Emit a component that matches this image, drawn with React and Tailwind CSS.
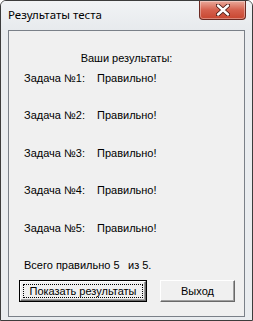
import React from 'react';

// Classic 3D push button
function WinButton({ children, isDefault = false, className = '' }) {
  return (
    <div
      className={`h-[22px] ${isDefault ? 'border border-black' : ''} ${className}`}
    >
      <div className="h-full border border-t-white border-l-white border-b-[#696969] border-r-[#696969] bg-[#f0f0f0] shadow-[inset_-1px_-1px_0_#a0a0a0]">
        <div className="h-full flex items-center justify-center p-[2px]">
          <div
            className={`h-full w-full flex items-center justify-center ${
              isDefault ? 'border border-dotted border-black' : ''
            }`}
          >
            {children}
          </div>
        </div>
      </div>
    </div>
  );
}

function ResultRow({ label, value, className = '' }) {
  return (
    <div className={`flex h-[13px] leading-[13px] ${className}`}>
      <span className="w-[73px]">{label}</span>
      <span>{value}</span>
    </div>
  );
}

export default function App() {
  const results = ['Задача №1:', 'Задача №2:', 'Задача №3:', 'Задача №4:', 'Задача №5:'];
  const gaps = ['mt-[7px]', 'mt-[24px]', 'mt-[25px]', 'mt-[24px]', 'mt-[25px]'];

  return (
    <div className="w-[253px] h-[321px] bg-[#e9ecef] border border-[#3c3c3c] rounded-t-[6px] flex flex-col overflow-hidden font-['Liberation_Sans',Arial,sans-serif] text-[11px] text-black">
      {/* Title bar */}
      <div className="h-[29px] flex items-start justify-between bg-gradient-to-b from-[#f1f3f5] to-[#e7eaed]">
        <div className="pl-[7px] pt-[6px] text-[11.5px] leading-[16px] text-[#000] font-['Noto_Sans','Open_Sans',sans-serif]">
          Результаты теста
        </div>
        <div className="mr-[6px] w-[47px] h-[19px] rounded-b-[4px] border border-t-0 border-[#6b2a22] bg-gradient-to-b from-[#e9a99b] via-[#d5604d] to-[#c8452f] flex items-center justify-center shadow-[inset_0_0_0_1px_rgba(255,255,255,0.35)]">
          <svg width="14" height="12" viewBox="0 0 14 12">
            <path
              d="M2 1.5 L12 10.5 M12 1.5 L2 10.5"
              stroke="#4a1a14"
              strokeWidth="4.2"
              strokeLinecap="round"
            />
            <path
              d="M2 1.5 L12 10.5 M12 1.5 L2 10.5"
              stroke="#ffffff"
              strokeWidth="2.4"
              strokeLinecap="round"
            />
          </svg>
        </div>
      </div>

      {/* Client area */}
      <div className="mx-[7px] flex-1 mb-[3px] border border-[#7a8088] bg-[#f0f0f0] flex flex-col pt-[21px] pl-[15px]">
        <div className="h-[13px] leading-[13px] text-center pr-[15px]">Ваши результаты:</div>
        {results.map((label, i) => (
          <ResultRow key={label} label={label} value="Правильно!" className={gaps[i]} />
        ))}
        <div className="mt-[24px] flex h-[13px] leading-[13px]">
          <span className="w-[104px]">Всего правильно 5</span>
          <span>из 5.</span>
        </div>
        <div className="mt-[8px] flex items-start">
          <WinButton isDefault className="ml-[-5px] w-[128px]">
            <span>Показать результаты</span>
          </WinButton>
          <WinButton className="ml-[13px] w-[75px]">
            <span>Выход</span>
          </WinButton>
        </div>
      </div>
    </div>
  );
}
